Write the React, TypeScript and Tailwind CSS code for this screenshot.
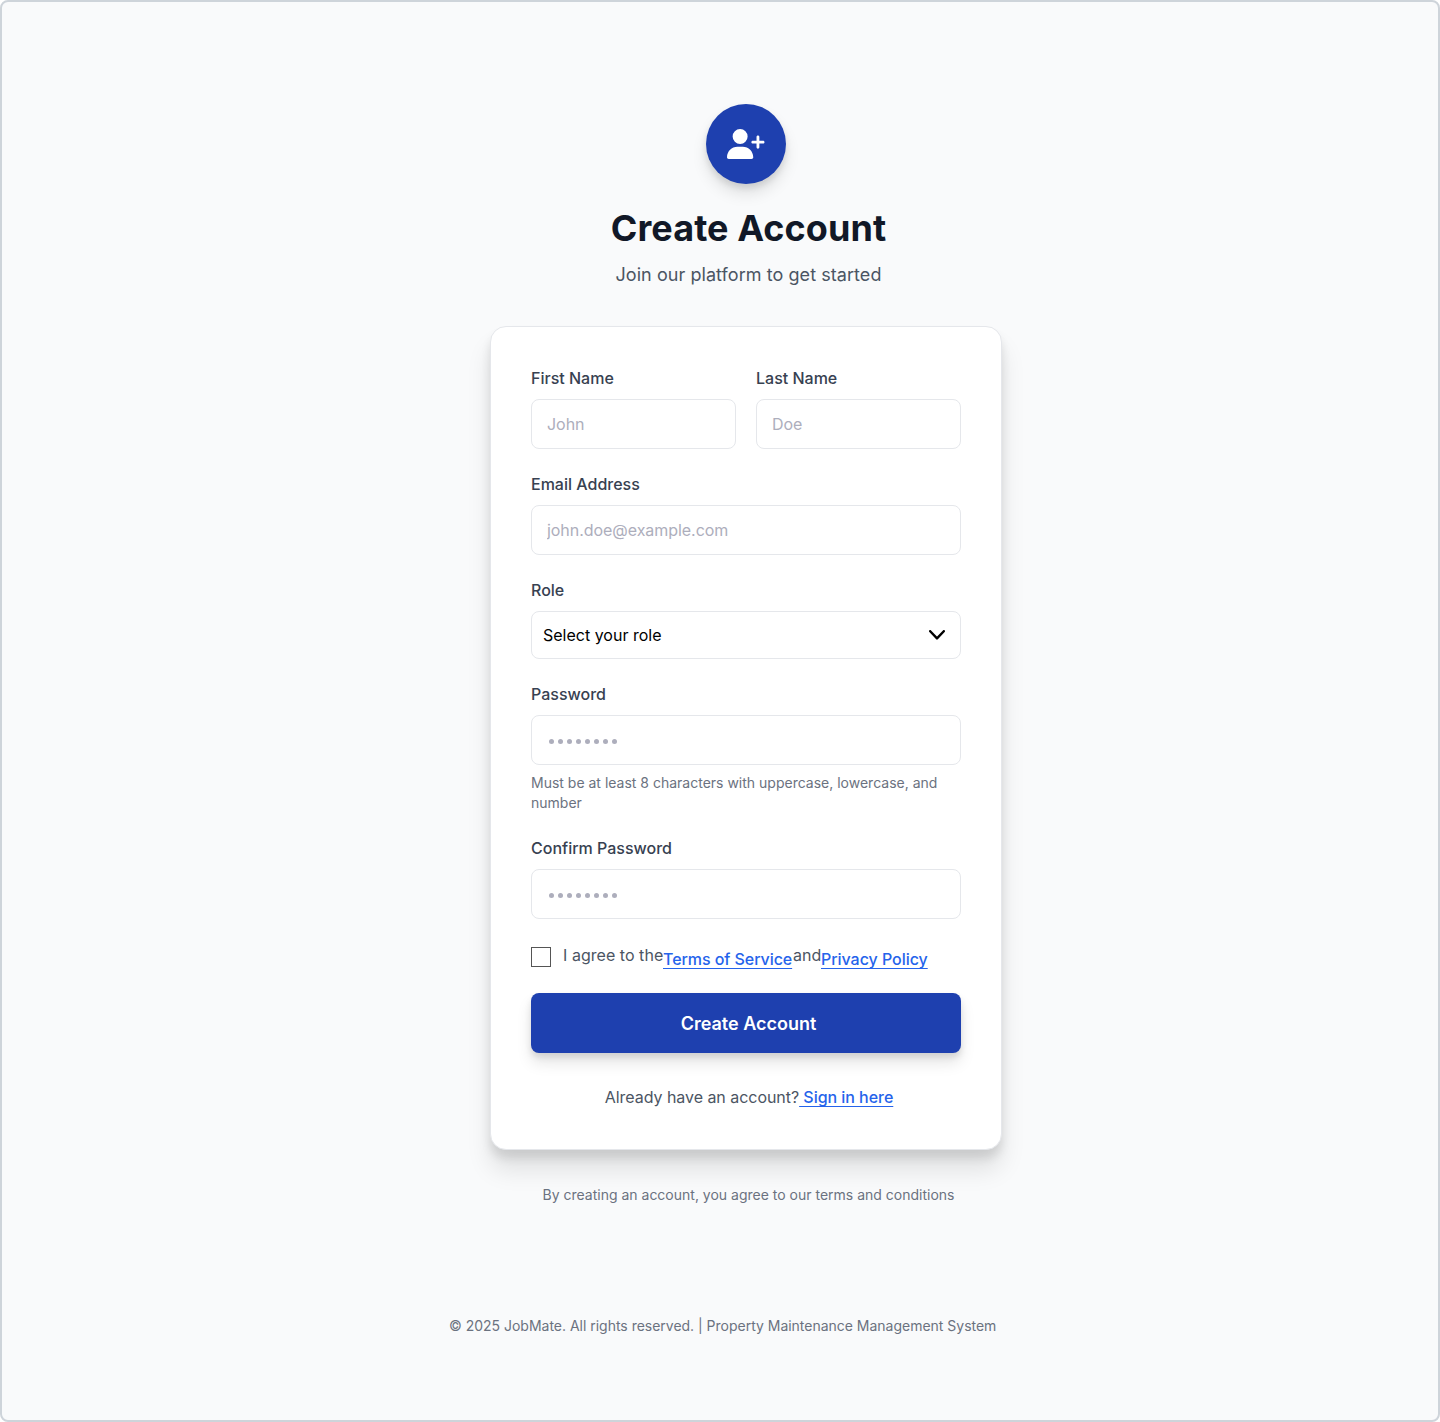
import { FaUserPlus } from "react-icons/fa6";

function Label({ children }: { children: string }) {
  return <label className="block h-6 text-base leading-6 font-medium text-[#374151]">{children}</label>;
}

function Field({ label, placeholder, type = "text" }: { label: string; placeholder: string; type?: string }) {
  return (
    <div className="flex min-w-0 flex-1 flex-col gap-[9px]">
      <Label>{label}</Label>
      <input
        type={type}
        placeholder={placeholder}
        className="h-[50px] w-full rounded-lg border border-[#e5e7eb] bg-white px-[15px] text-base tracking-[-0.05px] text-black outline-none placeholder:text-[#adaebc]"
      />
    </div>
  );
}

function PasswordField({ label }: { label: string }) {
  return (
    <div className="flex flex-col gap-[9px]">
      <Label>{label}</Label>
      <div className="flex h-[50px] items-center gap-1 rounded-lg border border-[#e5e7eb] bg-white pt-[3px] pl-[17px]">
        {Array.from({ length: 8 }, (_, i) => (
          <span key={i} className="size-[5px] rounded-full bg-[#adaebc]" />
        ))}
      </div>
    </div>
  );
}

export default function App() {
  return (
    <div className="flex h-[1422px] w-[1440px] flex-col rounded-lg border-2 border-[#ced4da] bg-[#f9fafb] pt-[102px] font-['Inter',sans-serif]">
      <main className="ml-[488px] flex w-[512px] flex-col">
        <header className="flex flex-col items-center">
          <div className="flex size-20 items-center justify-center rounded-full bg-[#1e40af] shadow-[0_4px_6px_rgba(0,0,0,0.1),0_10px_15px_rgba(0,0,0,0.1)]">
            <FaUserPlus className="h-[30px] w-[37.5px] text-white" />
          </div>
          <h1 className="mt-6 ml-[5px] text-4xl leading-10 font-bold tracking-[0.08px] whitespace-nowrap text-[#111827]">Create Account</h1>
          <p className="mt-[13px] ml-[5px] text-lg leading-7 tracking-[0.06px] whitespace-nowrap text-[#4b5563]">Join our platform to get started</p>
        </header>

        <form className="mt-[37px] flex h-[824px] flex-col rounded-2xl border border-[#e5e7eb] bg-white px-10 pt-[39px] shadow-[0_8px_10px_rgba(0,0,0,0.1),0_20px_25px_rgba(0,0,0,0.1)]">
          <div className="flex gap-5">
            <Field label="First Name" placeholder="John" />
            <Field label="Last Name" placeholder="Doe" />
          </div>
          <div className="mt-[23px] flex">
            <Field label="Email Address" placeholder="john.doe@example.com" type="email" />
          </div>
          <div className="mt-[23px] flex flex-col gap-[9px]">
            <Label>Role</Label>
            <button type="button" className="flex h-12 items-center justify-between rounded-lg border border-[#e5e7eb] bg-white pr-[15px] pl-[11px] text-base text-black">
              Select your role
              <svg viewBox="0 0 16 10" className="h-2.5 w-4" fill="none" stroke="black" strokeWidth="2.4" strokeLinecap="round" strokeLinejoin="round">
                <path d="M1.2 1.2 8 8.4l6.8-7.2" />
              </svg>
            </button>
          </div>
          <div className="mt-[23px]">
            <PasswordField label="Password" />
            <p className="mt-2 text-sm leading-5 text-[#6b7280]">
              Must be at least 8 characters with uppercase, lowercase, and
              <br />
              number
            </p>
          </div>
          <div className="mt-[23px]">
            <PasswordField label="Confirm Password" />
          </div>
          <div className="mt-6 flex h-[30px] items-start text-base leading-6 whitespace-nowrap text-[#4b5563]">
            <span className="mt-1 mr-3 size-5 border border-[#555] bg-white" />
            <span className="w-[100px] tracking-[0.04px]">I agree to the</span>
            <a className="mt-1 w-[130px] font-medium tracking-[-0.06px] text-[#2563eb] underline decoration-1 underline-offset-[3px]">Terms of Service</a>
            <span className="w-7">and</span>
            <a className="mt-1 font-medium tracking-[-0.04px] text-[#2563eb] underline decoration-1 underline-offset-[3px]">Privacy Policy</a>
          </div>
          <button type="button" className="mt-5 h-[60px] rounded-lg bg-[#1e40af] pt-[2px] pl-[5px] text-lg leading-7 font-semibold text-white shadow-[0_4px_6px_rgba(0,0,0,0.1),0_10px_15px_rgba(0,0,0,0.1)]">
            Create Account
          </button>
          <p className="mt-8 pl-[6px] text-center text-base leading-6 tracking-[-0.04px] whitespace-pre text-[#4b5563]">
            Already have an account?<a className="font-medium text-[#2563eb] underline decoration-1 underline-offset-[3px]">{" Sign in here"}</a>
          </p>
        </form>
        <p className="mt-[35px] pl-[5px] text-center text-sm leading-5 text-[#6b7280]">By creating an account, you agree to our terms and conditions</p>
      </main>
      <footer className="mt-[111px] ml-[447px] text-sm leading-5 tracking-[-0.014px] text-[#6b7280]">
        © 2025 JobMate. All rights reserved. | Property Maintenance Management System
      </footer>
    </div>
  );
}
